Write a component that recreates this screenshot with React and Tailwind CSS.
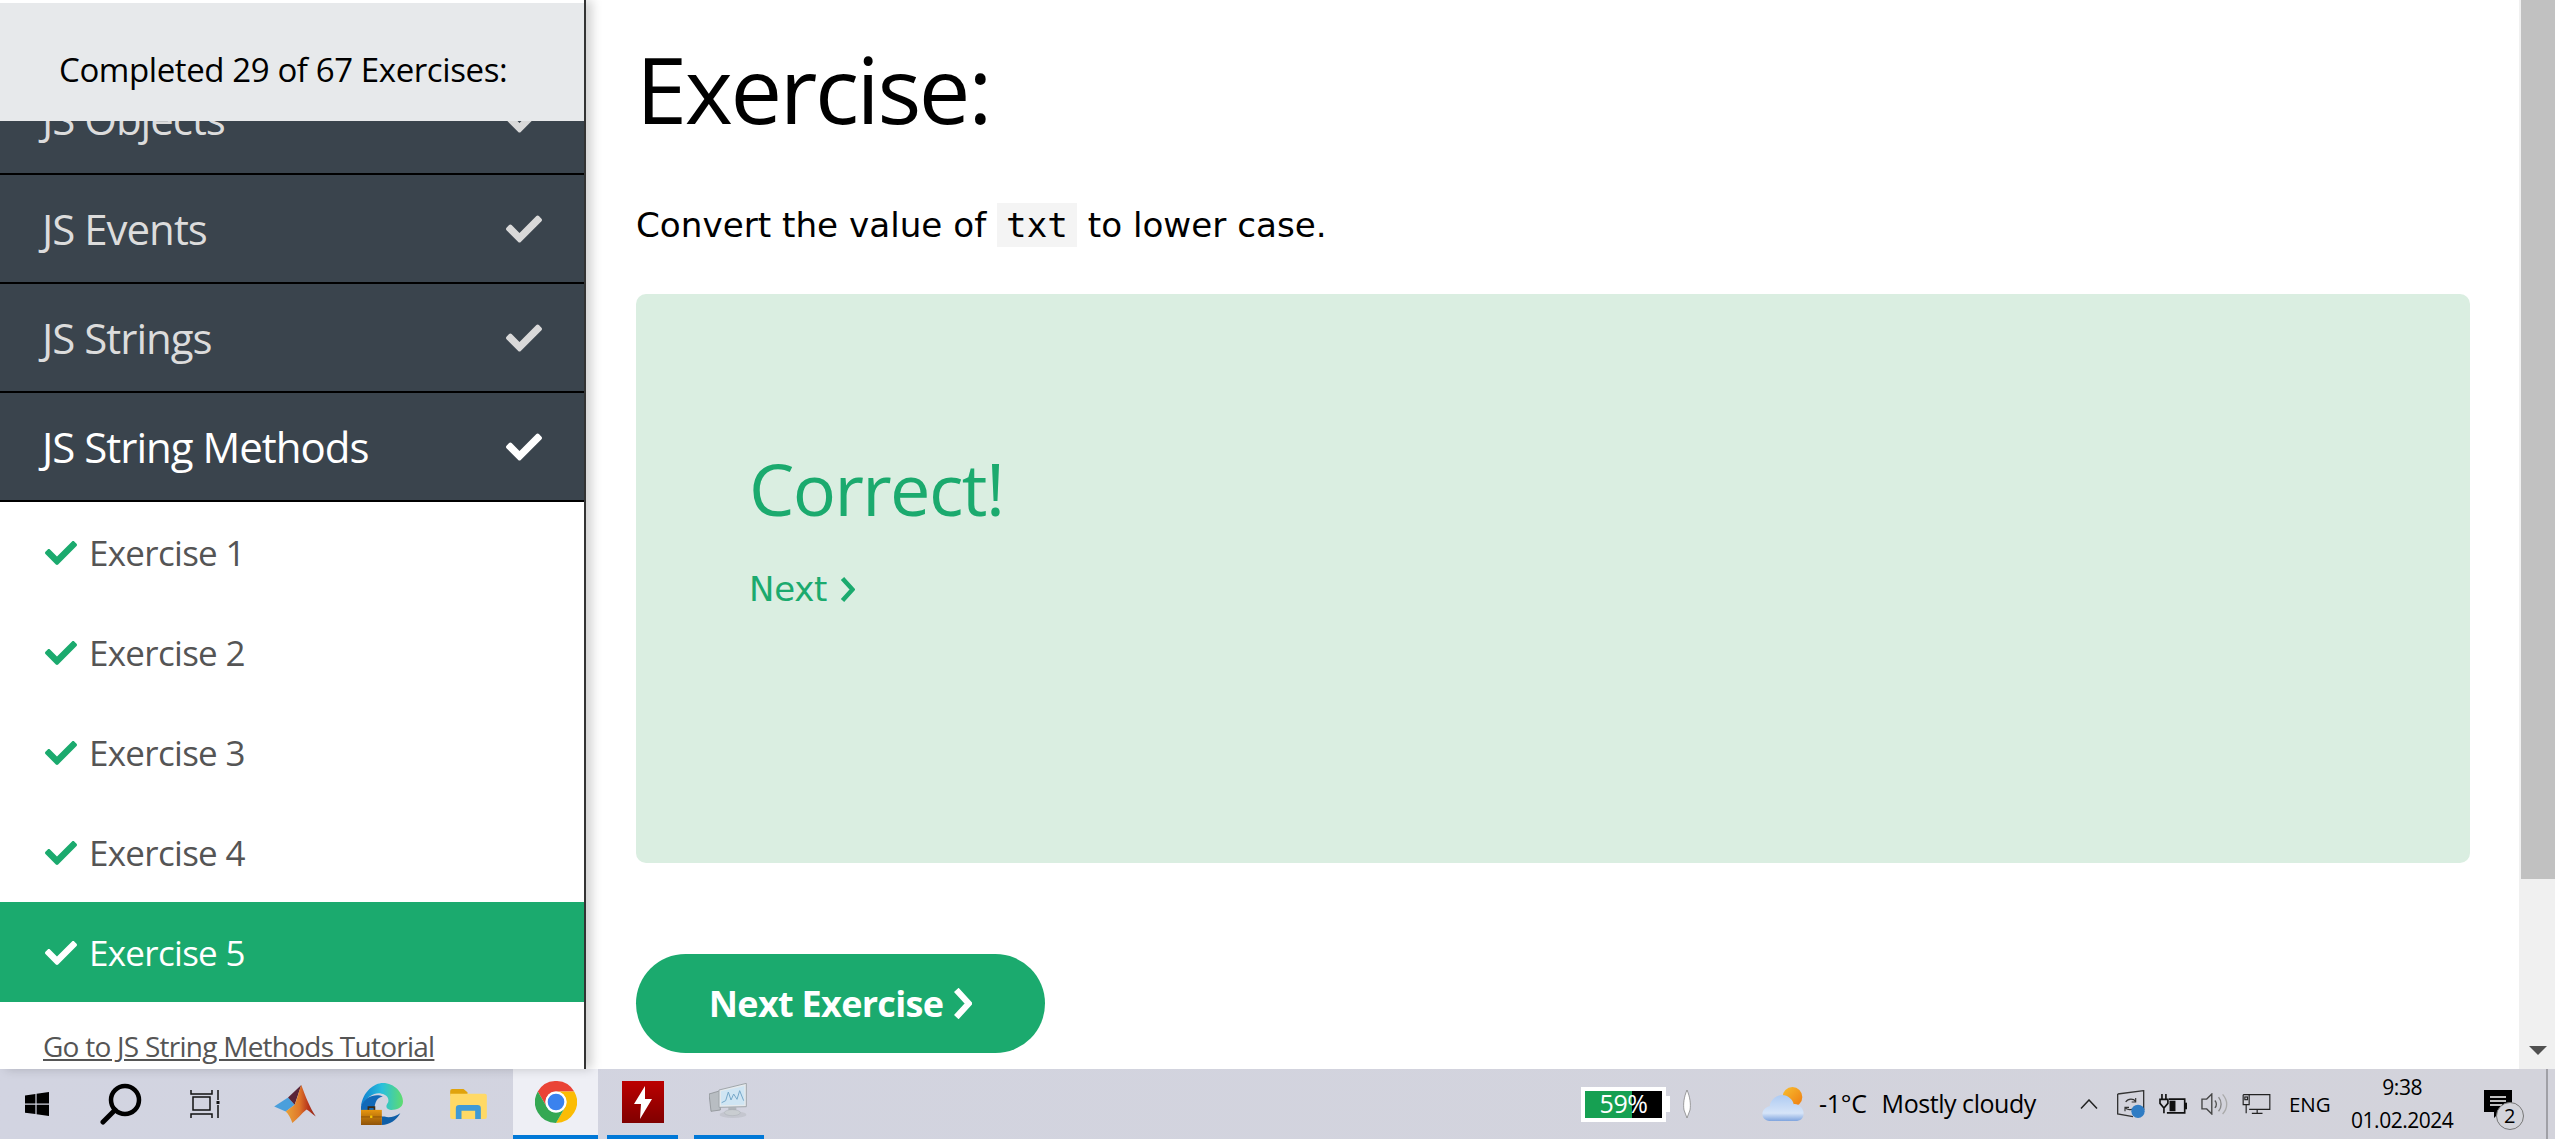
import React from 'react';
import { FaCheck } from 'react-icons/fa';

const SEGOE = 'font-["Open_Sans",sans-serif]';

const Chevron = ({ className, strokeWidth }) => (
    <svg viewBox="0 0 15 25" className={className} fill="none" stroke="currentColor" strokeWidth={strokeWidth}>
        <path d="M2.5 1.5 12.5 12.5 2.5 23.5" />
    </svg>
);

const TopicRow = ({ label, active }) => (
    <div className="h-[109px] shrink-0 bg-[#3a444d] border-b-2 border-black flex items-center justify-between pl-[42px] pr-[42px]">
        <span className={`text-[42px] tracking-[-1px] ${active ? 'text-white' : 'text-[#dcdcdc]'}`}>{label}</span>
        <FaCheck className={`w-[36px] h-[36px] ${active ? 'text-white' : 'text-[#d9d9d9]'}`} />
    </div>
);

const ExerciseRow = ({ label, active }) => (
    <div className={`h-[100px] shrink-0 flex items-center pl-[45px] pt-[2px] gap-[12px] ${active ? 'bg-[#1baa6e] text-white' : 'text-[#555]'}`}>
        <FaCheck className={`w-[32px] h-[32px] ${active ? 'text-white' : 'text-[#1baa6e]'}`} />
        <span className="text-[35px] tracking-[-0.7px]">{label}</span>
    </div>
);

const Sidebar = () => (
    <aside className={`w-[586px] shrink-0 h-full border-r-2 border-[#333] bg-white shadow-[6px_0_10px_rgba(0,0,0,0.18)] z-10 overflow-hidden ${SEGOE}`}>
        <div className="mt-[3px] h-[118px] bg-[#e7e9eb] flex items-center pl-[59px] pt-[16px] text-[33px] tracking-[-0.4px] text-black">
            Completed 29 of 67 Exercises:
        </div>
        {/* row scrolled under the sticky header */}
        <div className="h-[54px] overflow-hidden bg-[#3a444d] border-b-2 border-black">
            <div className="-mt-[57px] h-[109px] flex items-center justify-between pl-[42px] pr-[42px]">
                <span className="text-[42px] tracking-[-1px] text-[#dcdcdc]">JS Objects</span>
                <FaCheck className="w-[36px] h-[36px] text-[#d9d9d9]" />
            </div>
        </div>
        <TopicRow label="JS Events" />
        <TopicRow label="JS Strings" />
        <TopicRow label="JS String Methods" active />
        <ExerciseRow label="Exercise 1" />
        <ExerciseRow label="Exercise 2" />
        <ExerciseRow label="Exercise 3" />
        <ExerciseRow label="Exercise 4" />
        <ExerciseRow label="Exercise 5" active />
        <div className="pl-[43px] pt-[23px] text-[28px] tracking-[-0.75px] text-[#555] underline">Go to JS String Methods Tutorial</div>
    </aside>
);

const Main = () => (
    <main className='flex-1 min-w-0 pl-[50px] pr-[49px] bg-white font-["DejaVu_Sans",sans-serif]'>
        <h1 className={`pt-[29px] h-[174px] text-[92px] leading-[120px] text-black tracking-[-2.4px] ${SEGOE}`}>Exercise:</h1>
        <p className="h-[120px] pt-[30px] text-[34.2px] leading-[42px] text-black">
            Convert the value of{' '}
            <code className='font-["DejaVu_Sans_Mono",monospace] bg-[#f4f4f4] px-[9px] py-[2px] text-[34.2px]'>txt</code>{' '}
            to lower case.
        </p>
        <div className="h-[569px] rounded-[10px] bg-[#daeee1] pl-[113px] pt-[154px] text-[#1baa6e]">
            <div className={`text-[72px] leading-[80px] tracking-[-1.6px] ${SEGOE}`}>Correct!</div>
            <div className="mt-[40px] flex items-center gap-[13px] text-[34px] leading-[42px] tracking-[-0.3px]">
                Next
                <Chevron className="w-[15px] h-[25px]" strokeWidth="4.5" />
            </div>
        </div>
        <button className={`mt-[91px] w-[409px] h-[99px] rounded-full bg-[#1baa6e] text-white text-[36px] font-bold tracking-[-0.7px] flex items-center justify-center gap-[10px] ${SEGOE}`}>
            Next Exercise
            <Chevron className="w-[19px] h-[31px]" strokeWidth="5" />
        </button>
    </main>
);

const Scrollbar = () => (
    <div className="w-[36px] shrink-0 h-full bg-[#f0f0f0] flex flex-col items-end">
        <div className="w-[34px] h-[879px] bg-[#c1c1c1]" />
        <div className="mt-auto mb-[14px] mr-[8px] w-0 h-0 border-l-[9px] border-r-[9px] border-t-[9px] border-l-transparent border-r-transparent border-t-[#505050]" />
    </div>
);

const WindowsLogo = () => (
    <svg width="24" height="24" viewBox="0 0 24 24" fill="#000">
        <path d="M0 3.4 10.4 2v9.5H0zM11.6 1.8 24 0v11.5H11.6zM0 12.7h10.4v9.4L0 20.7zM11.6 12.7H24V24l-12.4-1.8z" />
    </svg>
);

const SearchIcon = () => (
    <svg width="42" height="42" viewBox="0 0 42 42" fill="none" stroke="#000">
        <circle cx="25" cy="17" r="14" strokeWidth="4.5" />
        <path d="M15 27 3 39" strokeWidth="5" strokeLinecap="round" />
    </svg>
);

const TaskViewIcon = () => (
    <svg width="30" height="28" viewBox="0 0 30 28" fill="none" stroke="#111" strokeWidth="1.5">
        <path d="M1 0v4h21V0M3 7h17v13H3zM1 28v-4h21v4M28 0v10M28 15v13" />
        <rect x="26.5" y="11" width="3" height="3" fill="#111" stroke="none" />
    </svg>
);

const MatlabIcon = () => (
    <svg width="42" height="38" viewBox="0 0 126 115">
        <defs>
            <linearGradient id="ml" x1="0" y1="0" x2="1" y2="0">
                <stop offset="0" stopColor="#e8a33a" />
                <stop offset="0.45" stopColor="#e0782a" />
                <stop offset="0.75" stopColor="#b8361c" />
                <stop offset="1" stopColor="#8f2a1a" />
            </linearGradient>
        </defs>
        <path d="M0 65 42 38 62 60 35 80z" fill="#4a9fdc" />
        <path d="M42 38 82 0 62 60z" fill="#5a2438" />
        <path d="M82 0C94 32 108 70 126 95 114 88 106 78 98 74 84 84 70 104 55 115 50 100 44 88 35 80L62 60C70 42 76 14 82 0z" fill="url(#ml)" />
    </svg>
);

const EdgeIcon = () => (
    <svg width="42" height="42" viewBox="0 0 125 125">
        <defs>
            <linearGradient id="edge" x1="0" y1="0.5" x2="1" y2="0.5">
                <stop offset="0" stopColor="#0f7fd0" />
                <stop offset="0.5" stopColor="#2ac0dc" />
                <stop offset="1" stopColor="#5fdc6e" />
            </linearGradient>
            <linearGradient id="case" x1="0" y1="0" x2="0" y2="1">
                <stop offset="0" stopColor="#e8960f" />
                <stop offset="1" stopColor="#8f5208" />
            </linearGradient>
        </defs>
        <path d="M0 70C5 25 40 0 65 0 100 0 125 30 125 55 125 75 105 80 90 80 78 80 72 72 78 62 85 55 82 40 70 35 50 25 25 30 0 70z" fill="url(#edge)" />
        <path d="M0 70C10 40 45 30 65 40 50 42 40 55 40 80H0z" fill="#1269b8" />
        <path d="M62 125C85 125 105 110 117 90 100 100 85 105 70 100L62 100z" fill="#0f5fa8" />
        <path d="M22 80v-8h18v8" fill="none" stroke="#3d2a14" strokeWidth="5" />
        <rect x="0" y="80" width="62" height="45" fill="url(#case)" />
        <rect x="0" y="100" width="62" height="2" fill="#7a4508" />
        <rect x="27" y="97" width="7" height="7" rx="1" fill="#f5c400" />
    </svg>
);

const FolderIcon = () => (
    <svg width="37" height="30" viewBox="0 0 110 90">
        <path d="M0 6a6 6 0 0 1 6-6h34l12 10v10H0z" fill="#e0a30c" />
        <path d="M0 14h104a6 6 0 0 1 6 6v64a6 6 0 0 1-6 6H6a6 6 0 0 1-6-6z" fill="#ffd966" />
        <path d="M17 90V58a10 10 0 0 1 10-10h55a10 10 0 0 1 10 10v32H75V65H34v25z" fill="#3f9ad6" />
    </svg>
);

const ChromeIcon = () => (
    <svg width="42" height="42" viewBox="0 0 48 48">
        <path d="M24 12H44.8A24 24 0 0 0 3.2 12L13.6 30A12 12 0 0 1 24 12z" fill="#ea4335" />
        <path d="M44.8 12H24A12 12 0 0 1 34.4 30L24 48A24 24 0 0 0 44.8 12z" fill="#fbbc04" />
        <path d="M24 48 34.4 30A12 12 0 0 1 13.6 30L3.2 12A24 24 0 0 0 24 48z" fill="#34a853" />
        <circle cx="24" cy="24" r="12" fill="#fff" />
        <circle cx="24" cy="24" r="9.5" fill="#3b82ee" />
    </svg>
);

const BoltApp = () => (
    <div className="w-[42px] h-[42px] bg-gradient-to-b from-[#bc0000] to-[#800000] flex items-center justify-center">
        <svg width="18" height="33" viewBox="0 0 18 33" fill="#fff">
            <path d="M11 0 0 18h7L6 33 18 13h-7z" />
        </svg>
    </div>
);

const MonitorApp = () => (
    <svg width="40" height="38" viewBox="0 0 120 112">
        <ellipse cx="72" cy="94" rx="40" ry="10" fill="#bdc0c8" opacity="0.7" />
        <path d="M58 72h24v14H58z" fill="#b0b5ba" />
        <ellipse cx="70" cy="88" rx="24" ry="9" fill="#c9cdd1" stroke="#9ba0a6" />
        <path d="M0 32 34 22V80L6 84z" fill="#b8bdc2" stroke="#808588" strokeWidth="2" />
        <path d="M30 20 112 0V70L30 72z" fill="#e4e9ec" stroke="#a0a6ab" strokeWidth="3" />
        <path d="M36 24 106 8V64L36 66z" fill="#cfe5f3" />
        <path d="M38 58 50 52 58 26 66 50 74 32 84 48 92 22 104 52" fill="none" stroke="#76a8c9" strokeWidth="3" />
    </svg>
);

const WeatherIcon = () => (
    <svg width="42" height="34" viewBox="0 0 125 103">
        <defs>
            <linearGradient id="sun" x1="0" y1="0" x2="1" y2="1">
                <stop offset="0" stopColor="#f8c030" />
                <stop offset="1" stopColor="#ee7a10" />
            </linearGradient>
            <linearGradient id="cloud" x1="0" y1="0" x2="0" y2="1">
                <stop offset="0" stopColor="#aecbf2" />
                <stop offset="0.7" stopColor="#d6e4f8" />
                <stop offset="1" stopColor="#7fa4de" />
            </linearGradient>
        </defs>
        <circle cx="91" cy="30" r="30" fill="url(#sun)" />
        <path d="M22 103C8 103 0 92 0 82 0 70 10 60 22 58 25 35 45 24 60 24 78 24 92 38 95 52 110 50 125 65 125 80 125 95 115 103 100 103z" fill="url(#cloud)" />
    </svg>
);

const TaskButton = ({ children, open, running, className }) => (
    <div className={`h-full flex items-center justify-center border-b-[4px] ${running ? 'border-[#0078d7]' : 'border-transparent'} ${open ? 'bg-[#eeeff5]' : ''} ${className}`}>
        {children}
    </div>
);

const Battery = () => (
    <div className="flex items-center">
        <div className="w-[85px] h-[35px] border-[4px] border-white flex relative bg-black">
            <div className="w-[47px] h-full bg-[#16a052]" />
            <span className="absolute inset-0 flex items-center justify-center text-white text-[25px] tracking-[-0.5px]">59%</span>
        </div>
        <div className="w-[4px] h-[16px] bg-white" />
    </div>
);

const TrayIcons = () => (
    <div className="flex items-center ml-[19px] gap-[14px]">
        {/* sync */}
        <svg width="28" height="28" viewBox="0 0 84 84" fill="none" stroke="#333" strokeWidth="4">
            <path d="M2 12 80 2V60M2 12V72L48 80" />
            <path d="M26 36C34 24 50 26 56 34M56 24V36H44M52 54C44 62 30 60 24 52M24 64V52H36" strokeWidth="3.5" />
            <circle cx="63" cy="64" r="20" fill="#2f7cc4" stroke="none" />
        </svg>
        {/* power */}
        <svg width="28" height="20" viewBox="0 0 85 60" fill="none" stroke="#111" strokeWidth="5">
            <path d="M9 0V16M21 0V16M3 16H27V28L15 42 3 28zM15 42V58" />
            <path d="M30 15H78V57H24" />
            <rect x="32" y="20" width="18" height="32" fill="#111" stroke="none" />
            <rect x="78" y="26" width="7" height="20" fill="#111" stroke="none" />
        </svg>
        {/* speaker */}
        <svg width="27" height="22" viewBox="0 0 78 65" fill="none" stroke="#444" strokeWidth="4">
            <path d="M2 18H16L31 3V62L16 47H2z" />
            <path d="M40 22C46 28 46 38 40 44" stroke="#555" />
            <path d="M51 12C61 24 61 42 51 54" stroke="#888" />
            <path d="M63 4C79 22 79 44 63 62" stroke="#aaa" />
        </svg>
        {/* network */}
        <svg width="29" height="20" viewBox="0 0 84 60" fill="none" stroke="#222" strokeWidth="3.5">
            <path d="M2 2H82V46H20" />
            <path d="M2 2V32H20V2M11 32V58" />
            <rect x="7" y="9" width="8" height="8" />
            <path d="M44 46V58M28 58H60" />
        </svg>
    </div>
);

const NotificationIcon = () => (
    <div className="relative w-[40px] h-[40px] mt-[12px]">
        <svg width="28" height="28" viewBox="0 0 28 28" className="absolute left-0 top-0">
            <path d="M0 0h28v22H16l-6 6v-6H0z" fill="#000" />
            <path d="M6 7h16M6 11h16M6 15h12" stroke="#fff" strokeWidth="1.4" />
        </svg>
        <span className="absolute right-0 bottom-0 w-[28px] h-[28px] rounded-full border border-[#777] bg-[#d3d4da] flex items-center justify-center text-[20px] font-medium text-black">2</span>
    </div>
);

const Taskbar = () => (
    <footer className={`h-[70px] shrink-0 flex items-center bg-gradient-to-r from-[#d2d4e1] to-[#d3d3db] text-black ${SEGOE}`}>
        <div className="ml-[25px]"><WindowsLogo /></div>
        <div className="ml-[51px]"><SearchIcon /></div>
        <div className="ml-[48px]"><TaskViewIcon /></div>
        <div className="ml-[54px]"><MatlabIcon /></div>
        <div className="ml-[45px]"><EdgeIcon /></div>
        <div className="ml-[47px]"><FolderIcon /></div>
        <TaskButton open running className="w-[85px] ml-[26px]"><ChromeIcon /></TaskButton>
        <TaskButton running className="w-[71px] ml-[9px]"><BoltApp /></TaskButton>
        <TaskButton running className="w-[70px] ml-[16px]"><MonitorApp /></TaskButton>

        <div className="ml-[817px]"><Battery /></div>
        <svg width="8" height="28" viewBox="0 0 8 28" className="ml-[13px]" fill="#fff" stroke="#888" strokeWidth="0.8">
            <path d="M4 0C7 7 8 14 7 20L4 28 1 20C0 14 1 7 4 0z" />
        </svg>
        <div className="ml-[71px]"><WeatherIcon /></div>
        <span className="ml-[15px] text-[25px] tracking-[-0.3px]">-1°C</span>
        <span className="ml-[15px] text-[25px] tracking-[-0.45px]">Mostly cloudy</span>
        <svg width="18" height="10" viewBox="0 0 18 10" className="ml-[44px]" fill="none" stroke="#222" strokeWidth="1.5">
            <path d="M1 9.5 9 1 17 9.5" />
        </svg>
        <TrayIcons />
        <span className="ml-[18px] text-[20.5px]">ENG</span>
        <div className="ml-[23px] w-[97px] flex flex-col items-center text-[21px] tracking-[-0.5px] leading-[33px]">
            <span>9:38</span>
            <span>01.02.2024</span>
        </div>
        <div className="ml-[33px]"><NotificationIcon /></div>
        <div className="ml-auto w-[9px] h-full border-l-2 border-[#a0a0a6]" />
    </footer>
);

export default function App() {
    return (
        <div className="w-[2555px] h-[1139px] flex flex-col overflow-hidden bg-white">
            <div className="h-[1069px] shrink-0 flex">
                <Sidebar />
                <Main />
                <Scrollbar />
            </div>
            <Taskbar />
        </div>
    );
}
